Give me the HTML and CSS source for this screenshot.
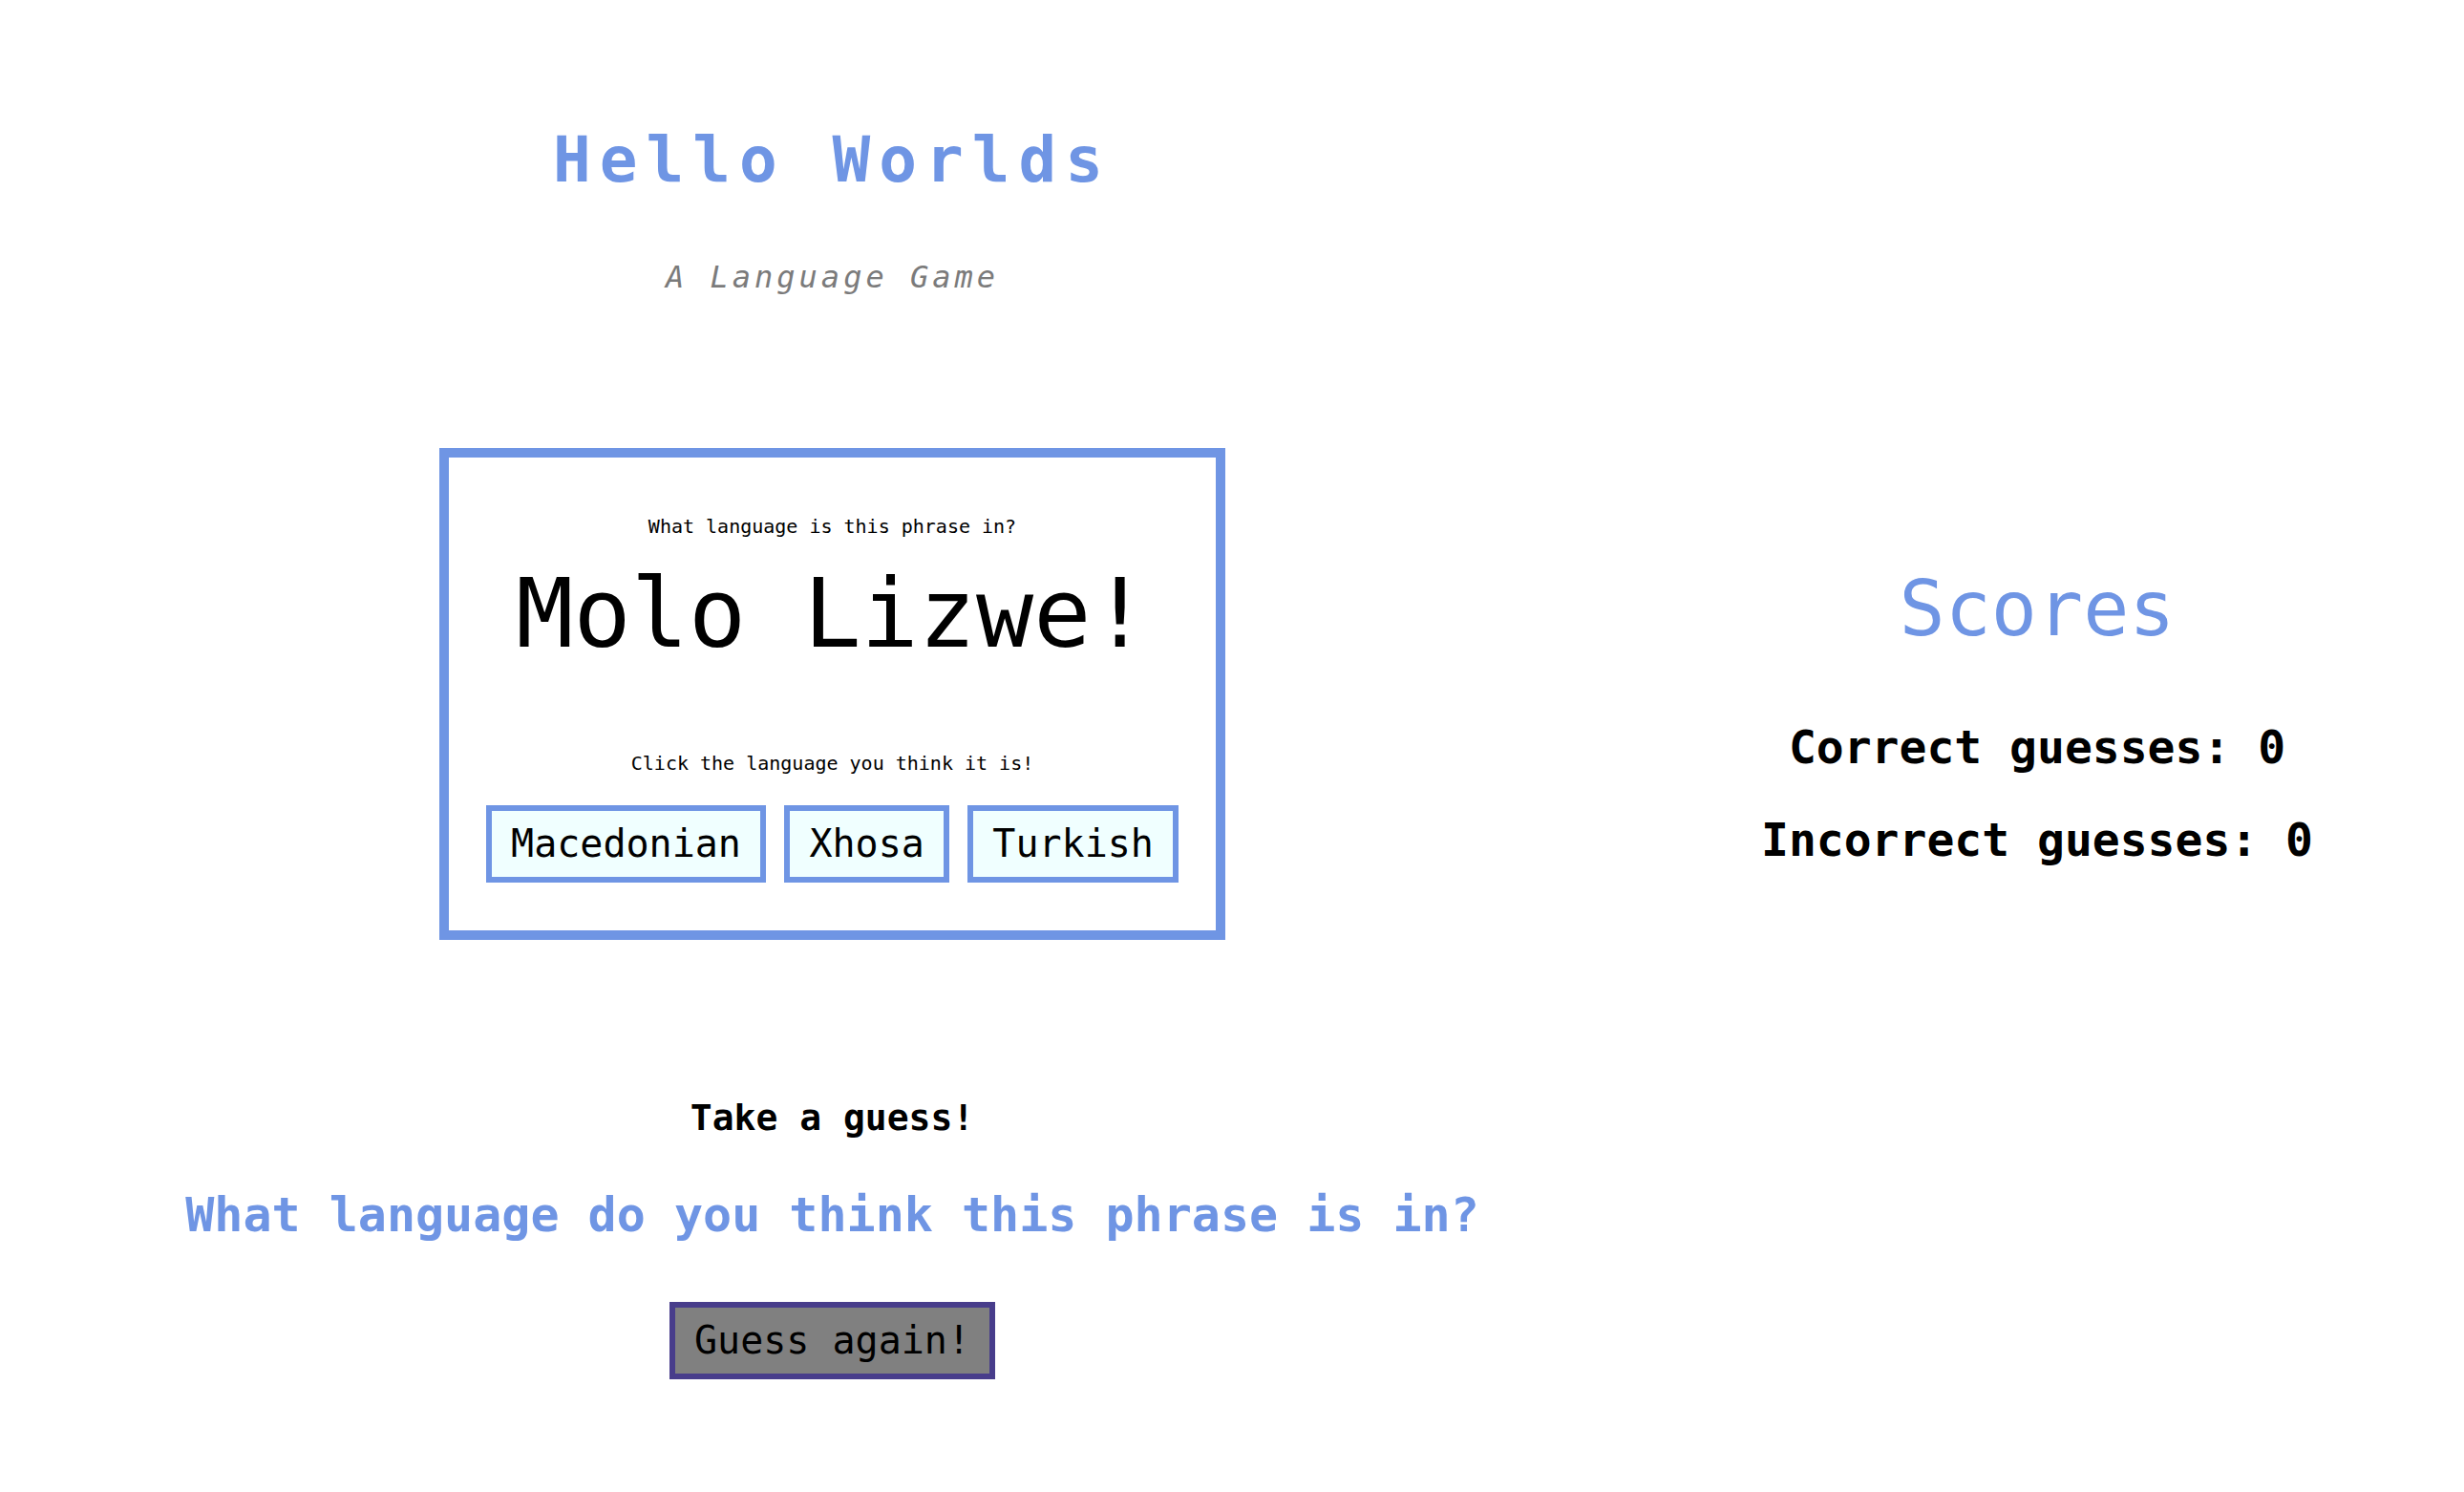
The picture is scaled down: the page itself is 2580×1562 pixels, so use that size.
FILE: index.html
```html
<!DOCTYPE html>
<html lang="en">
<head>
<meta charset="utf-8">
<title>Hello Worlds</title>
<link rel="stylesheet" href="styles.css">
</head>
<body>
<div class="page">
  <main class="game">
    <header class="masthead">
      <h1 class="title">Hello Worlds</h1>
      <p class="subtitle">A Language Game</p>
    </header>
    <section class="card">
      <p class="prompt">What language is this phrase in?</p>
      <p class="phrase">Molo Lizwe!</p>
      <p class="hint">Click the language you think it is!</p>
      <div class="options">
        <button class="option">Macedonian</button>
        <button class="option">Xhosa</button>
        <button class="option">Turkish</button>
      </div>
    </section>
    <p class="status">Take a guess!</p>
    <p class="question">What language do you think this phrase is in?</p>
    <button class="again">Guess again!</button>
  </main>
  <aside class="scores">
    <h2 class="scores-title">Scores</h2>
    <p class="score score-correct">Correct guesses: 0</p>
    <p class="score score-incorrect">Incorrect guesses: 0</p>
  </aside>
</div>
</body>
</html>
```

FILE: styles.css
```css
html, body {
  margin: 0;
  padding: 0;
  background: #ffffff;
}

body {
  font-family: "DejaVu Sans Mono", "Liberation Mono", monospace;
  color: #000000;
}

.page {
  display: flex;
  align-items: flex-start;
  width: 2580px;
}

.game {
  flex: 0 0 1743px;
  display: flex;
  flex-direction: column;
  align-items: center;
  text-align: center;
}

.masthead {
  display: flex;
  flex-direction: column;
  align-items: center;
  padding-top: 129.75px;
}

.title {
  margin: 0;
  font-size: 66px;
  line-height: 1.164;
  font-weight: bold;
  letter-spacing: 9px;
  color: #6f95e4;
}

.subtitle {
  margin: 65.7px 0 0;
  font-size: 32px;
  line-height: 1.164;
  font-style: italic;
  letter-spacing: 4px;
  color: #7b7b7b;
}

.card {
  box-sizing: border-box;
  width: 823px;
  margin-top: 159.5px;
  padding: 61.4px 0 50px;
  border: 10px solid #6f95e4;
  display: flex;
  flex-direction: column;
  align-items: center;
}

.prompt,
.hint {
  margin: 0;
  font-size: 20px;
  line-height: 1.164;
}

.phrase {
  margin: 21.5px 0 0;
  font-size: 100px;
  line-height: 1.164;
}

.hint {
  margin-top: 86.8px;
}

.options {
  display: flex;
  gap: 19.5px;
  margin-top: 31.3px;
}

.option,
.again {
  font-family: "DejaVu Sans Mono", "Liberation Mono", monospace;
  font-size: 40px;
  line-height: 49px;
  padding: 10px 20px;
  color: #000000;
  border-radius: 0;
  margin: 0;
}

.option {
  border: 6px solid #6f95e4;
  background: #f0ffff;
}

.status {
  margin: 163.7px 0 0;
  font-size: 38px;
  line-height: 1.164;
  font-weight: bold;
}

.question {
  margin: 51.7px 0 0;
  font-size: 50px;
  line-height: 1.164;
  font-weight: bold;
  color: #6f95e4;
}

.again {
  margin-top: 61.5px;
  border: 6px solid #483d8b;
  background: #808080;
}

.scores {
  flex: 0 0 780px;
  text-align: center;
  padding-top: 590.75px;
}

.scores-title {
  margin: 0;
  font-size: 80px;
  line-height: 1.164;
  font-weight: normal;
  color: #6f95e4;
}

.score {
  margin: 0;
  font-size: 48px;
  line-height: 1.164;
  font-weight: bold;
}

.score-correct {
  margin-top: 71.6px;
}

.score-incorrect {
  margin-top: 40.8px;
}
```
